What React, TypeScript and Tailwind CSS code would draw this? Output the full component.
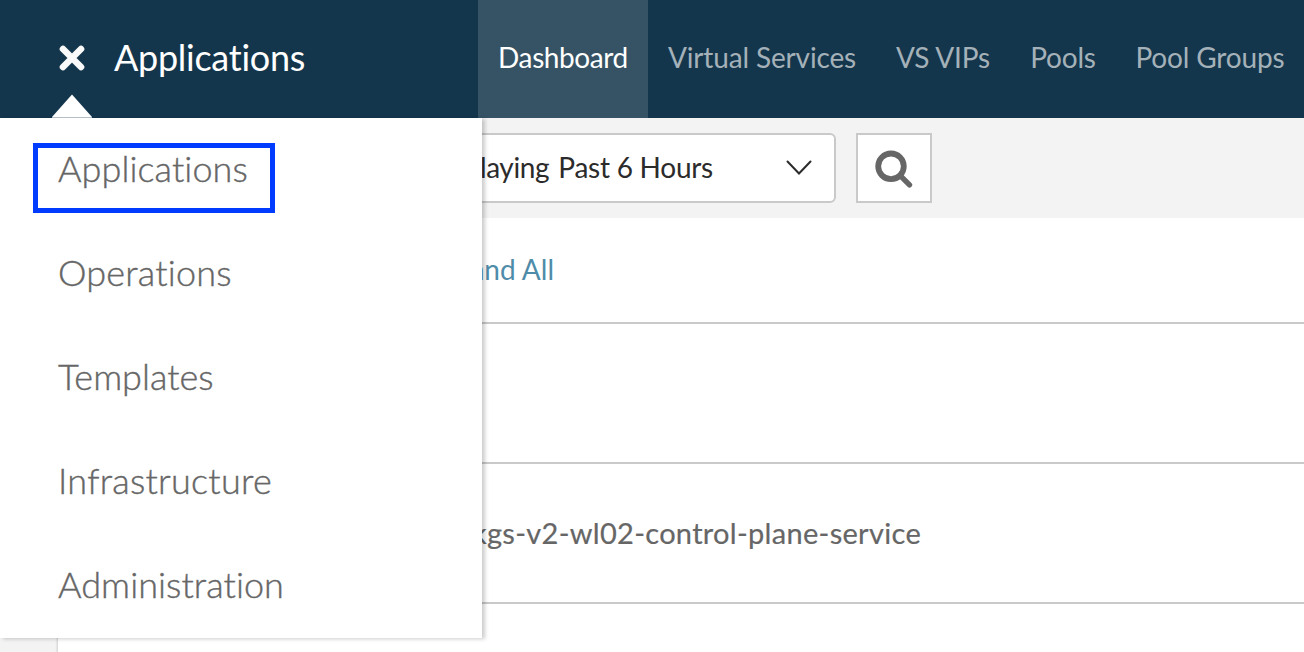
const tabs = [
  { label: 'Dashboard', cls: 'w-[170px] bg-[#365365] text-white tracking-[-0.4px]' },
  { label: 'Virtual Services', cls: 'w-[228px] text-[#a4b1b9] tracking-[-0.15px]' },
  { label: 'VS VIPs', cls: 'w-[134px] text-[#a4b1b9] tracking-[-0.15px]' },
  { label: 'Pools', cls: 'w-[106px] text-[#a4b1b9] tracking-[-0.2px]' },
  { label: 'Pool Groups', cls: 'w-[188px] text-[#a4b1b9] tracking-[-0.15px]' },
];

const sections = [
  { label: 'Applications', cls: 'tracking-[0.08px]' },
  { label: 'Operations', cls: 'tracking-[0.2px]' },
  { label: 'Templates', cls: '' },
  { label: 'Infrastructure', cls: 'tracking-[0.25px]' },
  { label: 'Administration', cls: 'tracking-[0.05px]' },
];

function Header() {
  return (
    <header className="flex h-[118px] shrink-0 bg-[#14364c]">
      <div className="flex w-[478px] items-center pb-[3px] pl-[59px]">
        <svg className="h-[26px] w-[26px]" viewBox="0 0 26 26" fill="none">
          <path d="M4 4 22 22M22 4 4 22" stroke="#fafafa" strokeWidth="6.6" strokeLinecap="round" />
        </svg>
        <h1 className="ml-[29px] pb-[1px] text-[36px] leading-[44px] tracking-[-0.27px] text-white">Applications</h1>
      </div>
      <nav className="flex">
        {tabs.map((t) => (
          <a key={t.label} className={`flex items-center justify-center pb-[5px] text-[28px] whitespace-nowrap ${t.cls}`}>
            <span>{t.label}</span>
          </a>
        ))}
      </nav>
    </header>
  );
}

function Menu() {
  return (
    <aside className="absolute top-[118px] left-0 z-10 h-[520px] w-[482px] bg-white shadow-[3px_1px_4px_rgba(0,0,0,0.2)]">
      <svg className="absolute top-[-24px] left-[52px] h-6 w-10" viewBox="0 0 40 24">
        <path d="M20 0.5 40 23H0Z" fill="#fff" />
        <path d="M0 23H40V24H0Z" fill="#b5bdc6" />
      </svg>
      <ul>
        {sections.map((s) => (
          <li
            key={s.label}
            className="flex h-[104px] items-center pb-[4px] pl-[58px] text-[36px] font-light text-[#666] [-webkit-text-stroke:0.4px_#666]"
          >
            <span className={s.cls}>{s.label}</span>
          </li>
        ))}
      </ul>
      <div className="absolute top-[25px] left-[33px] h-[70px] w-[242px] border-[5px] border-[#003cff]" />
    </aside>
  );
}

export default function App() {
  return (
    <div className="relative flex h-[652px] w-[1304px] flex-col overflow-hidden bg-[#f3f3f3] font-['Lato','Liberation_Sans',sans-serif] [font-variant-ligatures:none]">
      <Header />
      <div className="flex h-[100px] shrink-0 items-start gap-5 pt-[15px] pl-[436px]">
        <div className="flex h-[70px] w-[400px] items-center justify-between rounded-[6px] border-2 border-[#c9c9c9] bg-white pr-[22px]">
          <div className="flex w-[275px] justify-end gap-[9px] pb-[3px] text-[28px] whitespace-nowrap text-[#2b2b2b]">
            <span className="tracking-[-0.35px]">laying</span>
            <span className="tracking-[-0.25px]">Past 6 Hours</span>
          </div>
          <svg className="h-4 w-[26px]" viewBox="0 0 26 16" fill="none">
            <path d="M1.5 1.5 13 13.5 24.5 1.5" stroke="#2b2b2b" strokeWidth="2" strokeLinecap="round" />
          </svg>
        </div>
        <button className="flex h-[70px] w-[76px] items-center justify-center border-2 border-[#c9c9c9] bg-white">
          <svg className="mt-[1px] h-[38px] w-[38px]" viewBox="0 0 38 38" fill="none" stroke="#666">
            <circle cx="16" cy="16.3" r="12.8" strokeWidth="5.8" />
            <path d="M25.5 25.8 34.5 34.8" strokeWidth="5.4" strokeLinecap="round" />
          </svg>
        </button>
      </div>
      <main className="ml-[58px] flex min-h-0 flex-1 flex-col bg-white shadow-[-1px_2px_2px_rgba(0,0,0,0.15)]">
        <div className="flex h-[106px] shrink-0 items-center border-b-2 border-[#c9c9c9] pb-[3px]">
          <a className="w-[496px] text-right text-[28px] whitespace-nowrap text-[#4f8ca9]">and All</a>
        </div>
        <div className="h-[140px] shrink-0 border-b-2 border-[#c9c9c9]" />
        <div className="flex h-[140px] shrink-0 items-center border-b-2 border-[#c9c9c9]">
          <span className="w-[863px] text-right text-[29px] tracking-[0.3px] whitespace-nowrap text-[#666] [-webkit-text-stroke:0.2px_#666]">
            kgs-v2-wl02-control-plane-service
          </span>
        </div>
      </main>
      <Menu />
    </div>
  );
}
